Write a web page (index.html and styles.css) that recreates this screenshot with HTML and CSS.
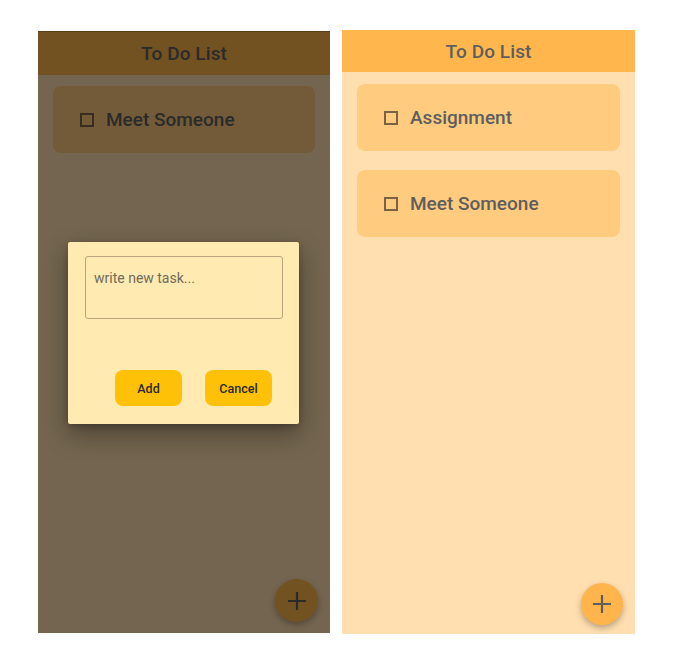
FILE: index.html
```html
<!DOCTYPE html>
<html lang="en">
<head>
<meta charset="utf-8">
<title>To Do List</title>
<link rel="stylesheet" href="styles.css">
</head>
<body>
<div class="stage">
  <section class="phone phone--dim">
    <header class="bar bar--tall"><h1>To Do List</h1></header>
    <ul class="list list--dim">
      <li class="task"><span class="box"></span><span class="label">Meet Someone</span></li>
    </ul>
    <button class="fab fab--dim" aria-label="Add task">
      <svg width="22" height="22" viewBox="0 0 22 22"><path d="M11 2v18M2 11h18" stroke="currentColor" stroke-width="2.2" fill="none"/></svg>
    </button>
    <div class="scrim"></div>
    <div class="dialog">
      <textarea class="input" placeholder="write new task..."></textarea>
      <div class="actions">
        <button class="btn">Add</button>
        <button class="btn">Cancel</button>
      </div>
    </div>
  </section>

  <section class="phone phone--lit">
    <header class="bar"><h1>To Do List</h1></header>
    <ul class="list">
      <li class="task"><span class="box"></span><span class="label">Assignment</span></li>
      <li class="task"><span class="box"></span><span class="label">Meet Someone</span></li>
    </ul>
    <button class="fab" aria-label="Add task">
      <svg width="22" height="22" viewBox="0 0 22 22"><path d="M11 2v18M2 11h18" stroke="currentColor" stroke-width="2.2" fill="none"/></svg>
    </button>
  </section>
</div>
</body>
</html>
```

FILE: styles.css
```css
* { box-sizing: border-box; }
html, body { margin: 0; padding: 0; background: #ffffff; }
body { font-family: Roboto, "Liberation Sans", Arial, sans-serif; }

.stage {
  display: flex;
  align-items: flex-start;
  gap: 12px;
  padding: 30px 0 0 38px;
}

.phone {
  position: relative;
  display: flex;
  flex-direction: column;
  background: #ffdfb0;
  overflow: hidden;
}
.phone--dim { width: 292px; height: 602px; margin-top: 1px; }
.phone--lit { width: 293px; height: 604px; }

.bar {
  height: 42px;
  background: #ffb74d;
  display: flex;
  align-items: center;
  justify-content: center;
}
.bar--tall { height: 44px; box-shadow: inset 0 1px 0 rgba(0,0,0,0.25); }
.bar h1 {
  margin: 0;
  font-size: 19px;
  font-weight: 500;
  color: #5e5e5e;
  letter-spacing: 0.1px;
}

.list {
  list-style: none;
  margin: 0;
  padding: 12px 15px 0;
  display: flex;
  flex-direction: column;
  gap: 19px;
}
.list--dim { padding-top: 11px; }

.task {
  height: 67px;
  background: #ffcb7f;
  border-radius: 8px;
  display: flex;
  align-items: center;
  padding-left: 27px;
  gap: 12px;
}
.box {
  width: 14px;
  height: 14px;
  border: 2px solid #7b6245;
  flex: none;
}
.label {
  font-size: 19px;
  font-weight: 500;
  color: #5e5e5e;
}

.fab {
  position: absolute;
  right: 12px;
  bottom: 9px;
  width: 42px;
  height: 42px;
  border-radius: 50%;
  border: none;
  background: #ffb54c;
  color: #5e5e5e;
  display: flex;
  align-items: center;
  justify-content: center;
  padding: 0;
  box-shadow: 0 3px 6px rgba(0,0,0,0.28);
}
.fab--dim { bottom: 11px; right: 12px; width: 43px; height: 43px; }

.scrim {
  position: absolute;
  inset: 0;
  background: rgba(0,0,0,0.55);
}

.dialog {
  position: absolute;
  left: 30px;
  top: 211px;
  width: 231px;
  height: 182px;
  background: #ffebb2;
  border-radius: 2px;
  padding: 14px 16px 18px 17px;
  display: flex;
  flex-direction: column;
  justify-content: space-between;
  box-shadow: 0 10px 24px rgba(0,0,0,0.35), 0 2px 6px rgba(0,0,0,0.2);
}
.input {
  width: 198px;
  height: 63px;
  resize: none;
  background: transparent;
  border: 1px solid #b9a57c;
  border-radius: 3px;
  padding: 13px 8px;
  font-family: Roboto, "Liberation Sans", Arial, sans-serif;
  font-size: 14px;
  color: #333;
  outline: none;
}
.input::placeholder { color: #6f6a5c; }

.actions {
  display: flex;
  justify-content: flex-end;
  gap: 23px;
  padding-right: 11px;
}
.btn {
  width: 67px;
  height: 36px;
  border: none;
  border-radius: 8px;
  background: #ffc107;
  font-family: Roboto, "Liberation Sans", Arial, sans-serif;
  font-size: 12.5px;
  font-weight: 500;
  color: #2a2a2a;
  padding: 0;
}
```
